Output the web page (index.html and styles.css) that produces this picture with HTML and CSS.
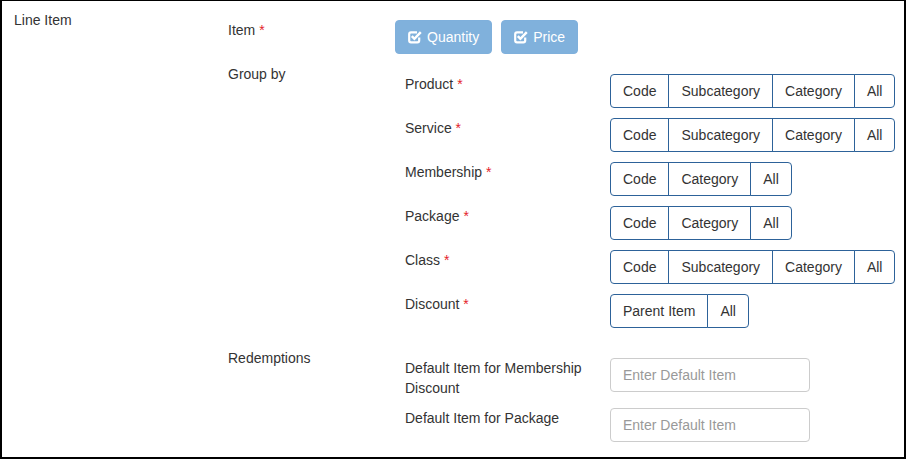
FILE: index.html
```html
<!DOCTYPE html>
<html lang="en">
<head>
    <meta charset="UTF-8">
    <meta name="viewport" content="width=device-width, initial-scale=1.0">
    <title>Line Item Settings</title>
    <link rel="stylesheet" href="styles.css">
</head>
<body>

    <div class="panel">
        <div class="section-title">Line Item</div>

        <div class="section-body">
            <!-- Item selection -->
            <div class="field">
                <div class="field-label">Item <span class="req">*</span></div>
                <div class="field-control btn-row">
                    <button class="btn-check">
                        <svg viewBox="0 0 14 14"><path d="M11.2 7.5V10.6a1.8 1.8 0 0 1-1.8 1.8H3A1.8 1.8 0 0 1 1.2 10.6V4.2A1.8 1.8 0 0 1 3 2.4h6" fill="none" stroke="#fff" stroke-width="2.2"/><path d="M3.8 6.2l2.6 2.6L12.8 2.2" fill="none" stroke="#fff" stroke-width="2.5"/></svg>
                        Quantity
                    </button>
                    <button class="btn-check">
                        <svg viewBox="0 0 14 14"><path d="M11.2 7.5V10.6a1.8 1.8 0 0 1-1.8 1.8H3A1.8 1.8 0 0 1 1.2 10.6V4.2A1.8 1.8 0 0 1 3 2.4h6" fill="none" stroke="#fff" stroke-width="2.2"/><path d="M3.8 6.2l2.6 2.6L12.8 2.2" fill="none" stroke="#fff" stroke-width="2.5"/></svg>
                        Price
                    </button>
                </div>
            </div>

            <!-- Group by options -->
            <div class="field">
                <div class="field-label">Group by</div>
                <div class="sub-fields">
                    <div class="sub-field">
                        <div class="sub-label">Product <span class="req">*</span></div>
                        <div class="btn-group">
                            <span>Code</span><span>Subcategory</span><span>Category</span><span>All</span>
                        </div>
                    </div>
                    <div class="sub-field">
                        <div class="sub-label">Service <span class="req">*</span></div>
                        <div class="btn-group">
                            <span>Code</span><span>Subcategory</span><span>Category</span><span>All</span>
                        </div>
                    </div>
                    <div class="sub-field">
                        <div class="sub-label">Membership <span class="req">*</span></div>
                        <div class="btn-group">
                            <span>Code</span><span>Category</span><span>All</span>
                        </div>
                    </div>
                    <div class="sub-field">
                        <div class="sub-label">Package <span class="req">*</span></div>
                        <div class="btn-group">
                            <span>Code</span><span>Category</span><span>All</span>
                        </div>
                    </div>
                    <div class="sub-field">
                        <div class="sub-label">Class <span class="req">*</span></div>
                        <div class="btn-group">
                            <span>Code</span><span>Subcategory</span><span>Category</span><span>All</span>
                        </div>
                    </div>
                    <div class="sub-field">
                        <div class="sub-label">Discount <span class="req">*</span></div>
                        <div class="btn-group">
                            <span>Parent Item</span><span>All</span>
                        </div>
                    </div>
                </div>
            </div>

            <!-- Redemptions -->
            <div class="field">
                <div class="field-label">Redemptions</div>
                <div class="sub-fields">
                    <div class="sub-field">
                        <div class="sub-label">Default Item for Membership Discount</div>
                        <input type="text" class="text-input" placeholder="Enter Default Item">
                    </div>
                    <div class="sub-field">
                        <div class="sub-label">Default Item for Package</div>
                        <input type="text" class="text-input" placeholder="Enter Default Item">
                    </div>
                </div>
            </div>
        </div>
    </div>

</body>
</html>
```

FILE: styles.css
```css
* {
    box-sizing: border-box;
}

body {
    margin: 0;
    font-family: 'Liberation Sans', Arial, sans-serif;
    font-size: 14px;
    line-height: 20px;
    color: #333;
    background-color: #fff;
}

.panel {
    width: 906px;
    height: 459px;
    border-style: solid;
    border-color: #000;
    border-width: 1px 2px 2px 2px;
    display: flex;
    align-items: flex-start;
}

.section-title {
    width: 226px;
    padding: 9px 0 0 12px;
}

.section-body {
    flex: 1;
    padding-top: 19px;
    display: flex;
    flex-direction: column;
    gap: 10px;
}

.field {
    display: flex;
    align-items: flex-start;
}

.field-label {
    width: 167px;
    flex-shrink: 0;
}

.req {
    color: #e4222a;
}

.btn-row {
    display: flex;
    gap: 9px;
}

.btn-check {
    display: flex;
    align-items: center;
    height: 34px;
    padding: 6px 12px;
    border: 1px solid #7fb0dc;
    border-radius: 4px;
    background-color: #80b1dc;
    color: #fff;
    font-family: inherit;
    font-size: 14px;
    line-height: 20px;
    cursor: not-allowed;
}

.btn-check svg {
    width: 14px;
    height: 14px;
    margin-right: 5px;
}

.sub-fields {
    padding: 10px 0 10px 10px;
    display: flex;
    flex-direction: column;
    gap: 10px;
}

.sub-field {
    display: flex;
    align-items: flex-start;
}

.sub-label {
    width: 205px;
    padding-right: 15px;
    flex-shrink: 0;
}

.btn-group {
    display: flex;
}

.btn-group span {
    height: 34px;
    padding: 6px 12px;
    border: 1px solid #2d6299;
    margin-left: -1px;
    background-color: #fff;
}

.btn-group span:first-child {
    margin-left: 0;
    border-radius: 4px 0 0 4px;
}

.btn-group span:last-child {
    border-radius: 0 4px 4px 0;
}

.text-input {
    width: 200px;
    height: 34px;
    padding: 6px 12px;
    border: 1px solid #ccc;
    border-radius: 4px;
    font-family: inherit;
    font-size: 14px;
    color: #555;
}

.text-input::placeholder {
    color: #999;
}
```
